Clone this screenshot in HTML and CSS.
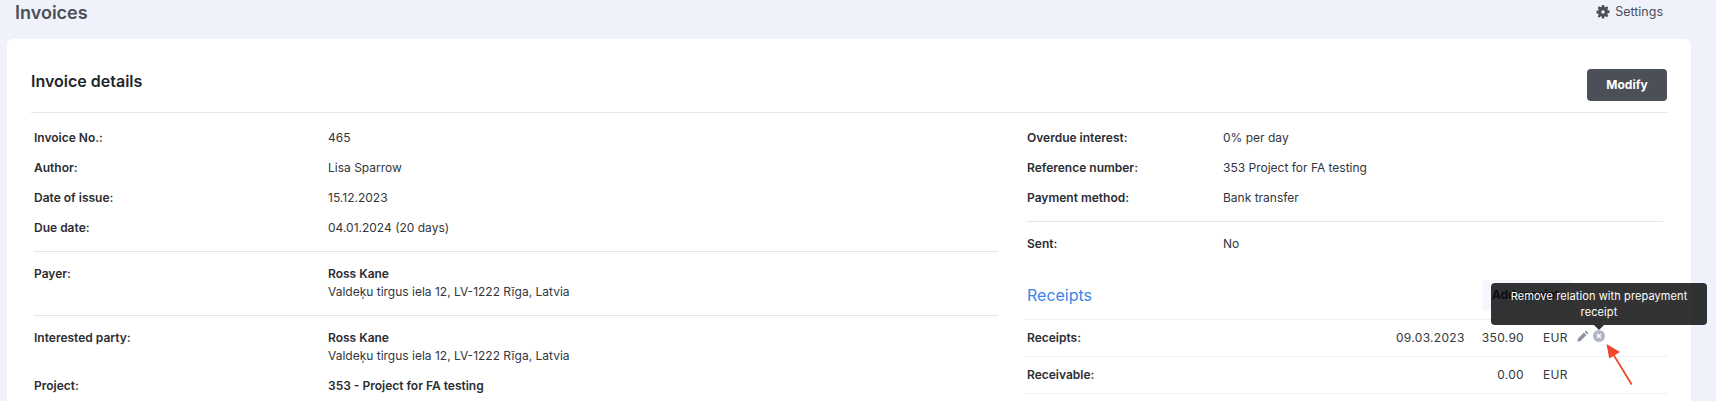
FILE: index.html
```html
<!DOCTYPE html>
<html lang="en">
<head>
<meta charset="utf-8">
<title>Invoices</title>
<link rel="stylesheet" href="styles.css">
</head>
<body>
<header class="topbar">
  <h1 class="page-title">Invoices</h1>
  <a class="settings">
    <svg class="gear" viewBox="0 0 24 24"><path fill-rule="evenodd" d="M10.200 0h3.600l.5 3.200 1.700.7L18.600 2l2.600 2.500-1.900 2.700.7 1.700 3.200.5v4.200l-3.200.5-.7 1.700 1.900 2.700-2.600 2.500-2.600-1.900-1.700.7-.5 3.200h-3.600l-.5-3.200-1.700-.7L5.400 22l-2.600-2.500 1.900-2.700-.7-1.700-3.200-.5V9.900l3.200-.5.7-1.700-1.900-2.700L5.400 2 8 3.900l1.700-.7zM12 9a3 3 0 1 0 0 6 3 3 0 0 0 0-6z"/></svg>
    Settings
  </a>
</header>
<main class="card">
  <div class="card-head">
    <h2 class="card-title">Invoice details</h2>
    <button class="btn">Modify</button>
  </div>
  <div class="columns">
    <section class="col-left">
      <div class="rows">
        <div class="row"><span class="label">Invoice No.:</span><span>465</span></div>
        <div class="row"><span class="label">Author:</span><span>Lisa Sparrow</span></div>
        <div class="row"><span class="label">Date of issue:</span><span>15.12.2023</span></div>
        <div class="row"><span class="label">Due date:</span><span>04.01.2024 (20 days)</span></div>
      </div>
      <div class="divider"></div>
      <div class="block"><span class="label">Payer:</span><div><strong>Ross Kane</strong><br>Valdeķu tirgus iela 12, LV-1222 Rīga, Latvia</div></div>
      <div class="divider flush"></div>
      <div class="block last"><span class="label">Interested party:</span><div><strong>Ross Kane</strong><br>Valdeķu tirgus iela 12, LV-1222 Rīga, Latvia</div></div>
      <div class="row"><span class="label">Project:</span><strong>353 - Project for FA testing</strong></div>
    </section>
    <section class="col-right">
      <div class="rows">
        <div class="row wide"><span class="label">Overdue interest:</span><span>0% per day</span></div>
        <div class="row wide"><span class="label">Reference number:</span><span>353 Project for FA testing</span></div>
        <div class="row wide"><span class="label">Payment method:</span><span>Bank transfer</span></div>
      </div>
      <div class="divider short"></div>
      <div class="row wide sent"><span class="label">Sent:</span><span>No</span></div>
      <div class="receipts-head">
        <h3 class="receipts-title">Receipts</h3>
        <span class="add-btn">Add receipt</span>
      </div>
      <div class="money-table">
        <div class="money-row">
          <span class="label">Receipts:</span>
          <span class="date">09.03.2023</span><span class="amount">350.90</span><span class="cur">EUR</span>
          <span class="actions">
            <svg class="pencil" viewBox="0 0 24 24"><path d="M18 1l5 5-2.600 2.600-5-5zM13.900 5l5 5L7 22l-6.500 1.500L2 17z"/></svg>
            <svg class="remove" viewBox="0 0 24 24"><circle cx="12" cy="12" r="12"/><path d="M8 8l8 8M16 8l-8 8"/></svg>
          </span>
        </div>
        <div class="money-row">
          <span class="label">Receivable:</span>
          <span class="date"></span><span class="amount">0.00</span><span class="cur">EUR</span>
          <span class="actions"></span>
        </div>
      </div>
    </section>
  </div>
</main>
<div class="tooltip">Remove relation with prepayment receipt</div>
<svg class="annotation" viewBox="0 0 40 50"><path class="shaft" d="M33 45L11 9"/><path class="head" d="M5 0l15 9-12 7z"/></svg>
</body>
</html>
```
FILE: styles.css
```css
* { box-sizing: border-box; }
html, body { margin: 0; height: 401px; overflow: hidden; }
body {
  position: relative;
  background: #eff2fb;
  font: 400 12px/18px Inter, "Liberation Sans", sans-serif;
  color: #33363c;
}
.topbar {
  height: 39px;
  display: flex;
  justify-content: space-between;
  align-items: flex-start;
  padding: 0 53px 0 15px;
}
.page-title {
  margin: 0;
  font-size: 18px;
  line-height: 25px;
  font-weight: 600;
  color: #4b4f58;
}
.settings {
  display: flex;
  align-items: center;
  gap: 5px;
  height: 24px;
  font-size: 12.500px;
  color: #4b4f58;
}
.gear { width: 14px; height: 14px; fill: #4b4f58; }
.card {
  margin: 0 25px 0 7px;
  height: 362px;
  padding: 0 24px;
  background: #fff;
  border-radius: 6px 6px 0 0;
}
.card-head {
  height: 74px;
  padding-top: 30px;
  display: flex;
  justify-content: space-between;
  align-items: flex-start;
  border-bottom: 1px solid #e2e5f0;
}
.card-title {
  margin: 0;
  font-size: 16px;
  line-height: 24px;
  font-weight: 600;
  color: #23252b;
}
.btn {
  width: 80px;
  height: 32px;
  border: 0;
  border-radius: 4px;
  background: #4b4f58;
  color: #fff;
  font: 700 12px/18px Inter, "Liberation Sans", sans-serif;
}
.columns { display: flex; }
.col-left { width: 964px; margin-left: 3px; }
.col-right { width: 640px; margin-left: 29px; }
.rows { padding-top: 10px; }
.row {
  height: 30px;
  display: grid;
  grid-template-columns: 294px 1fr;
  align-items: center;
}
.row.wide { grid-template-columns: 196px 1fr; }
.row.sent { margin-top: 7px; }
.label { font-weight: 600; color: #2b2d33; }
strong { font-weight: 600; color: #2b2d33; }
.divider { height: 1px; margin-top: 8px; background: #e5e5e7; }
.divider.flush { margin-top: 0; }
.divider.short { width: 636px; }
.block {
  display: grid;
  grid-template-columns: 294px 1fr;
  padding: 13px 0 14px;
}
.block.last { padding-bottom: 6px; }
.receipts-head {
  height: 61px;
  display: flex;
  justify-content: space-between;
  align-items: flex-start;
  border-bottom: 1px solid #eef0f6;
  margin-left: -2px;
  padding-left: 2px;
}
.receipts-title {
  margin: 24px 0 0;
  font-size: 16px;
  line-height: 24px;
  font-weight: 400;
  color: #3b86e6;
}
.add-btn {
  margin: 21px 95px 0 0;
  width: 90px;
  height: 30px;
  line-height: 30px;
  padding-left: 10px;
  background: #f5f7fc;
  border-radius: 4px;
  font-weight: 600;
  color: #2b2d33;
}
.money-table { margin-left: -2px; }
.money-row {
  height: 37px;
  padding-left: 2px;
  display: flex;
  align-items: center;
  border-bottom: 1px solid #eef0f6;
}
.money-row .label { width: 369px; }
.date { width: 68px; letter-spacing: .3px; }
.amount { width: 60px; text-align: right; letter-spacing: .3px; }
.cur { margin-left: 19px; width: 34px; letter-spacing: .3px; }
.actions { display: flex; align-items: center; gap: 4px; margin-top: -4px; }
.pencil { width: 12px; height: 12px; fill: #8d93a1; }
.remove { width: 12px; height: 12px; }
.remove circle { fill: #aeb5c4; }
.remove path { stroke: #fff; stroke-width: 3; fill: none; }
.tooltip {
  position: absolute;
  left: 1491px;
  top: 283px;
  width: 216px;
  height: 42px;
  padding: 5px 8px;
  line-height: 16px;
  font-size: 11px;
  letter-spacing: .1px;
  text-align: center;
  color: #fff;
  background: rgba(0, 0, 0, .8);
  border-radius: 4px;
}
.tooltip::after {
  content: "";
  position: absolute;
  left: 103px;
  top: 42px;
  border: 5px solid transparent;
  border-top-color: rgba(0, 0, 0, .8);
  border-bottom: 0;
}
.annotation { position: absolute; left: 1602px; top: 344px; width: 36px; height: 45px; }
.shaft { stroke: #f0452b; stroke-width: 2; fill: none; }
.head { fill: #f0452b; }
```
